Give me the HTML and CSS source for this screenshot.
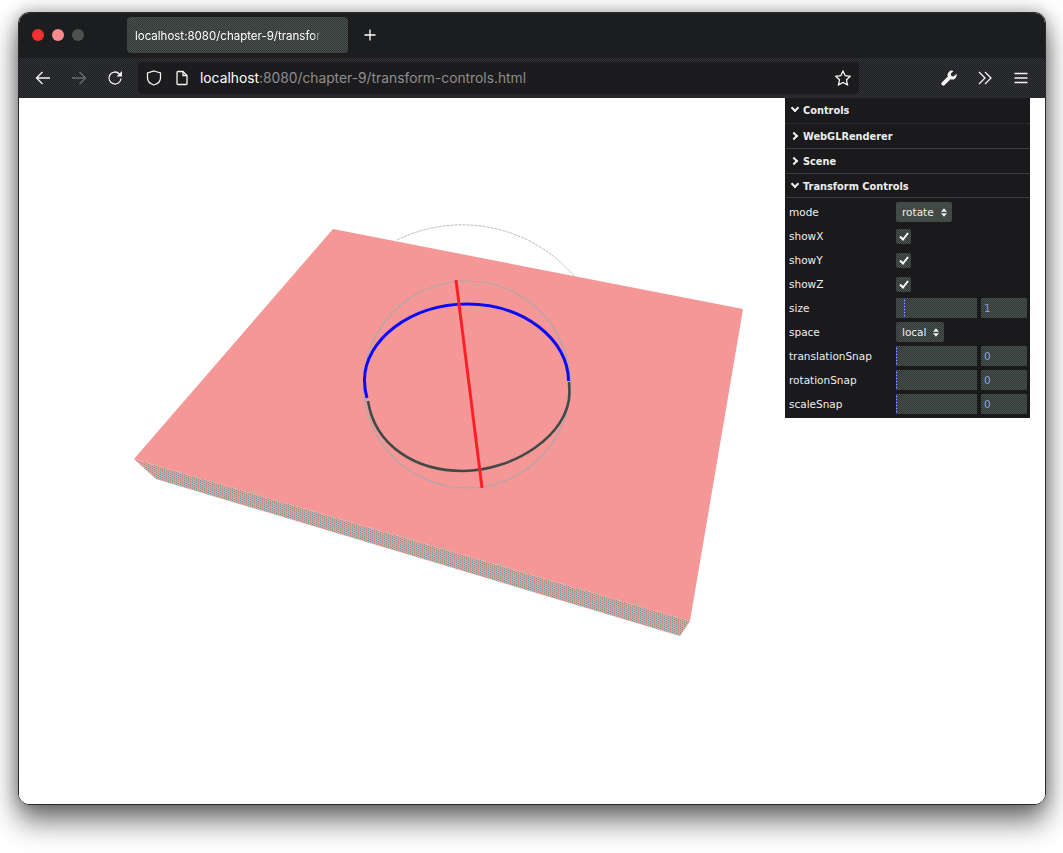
FILE: index.html
```html
<!DOCTYPE html>
<html lang="en">
<head>
    <meta charset="UTF-8">
    <title>transform-controls</title>
    <link rel="stylesheet" href="styles.css">
</head>
<body>

<div class="window">
    <div class="titlebar">
        <div class="lights">
            <span class="light red"></span>
            <span class="light pink"></span>
            <span class="light grey"></span>
        </div>
        <div class="tab">
            <span class="tab-title">localhost:8080/chapter-9/transform</span>
            <svg class="tab-close" viewBox="0 0 10 10"><path d="M1.5 1.5l7 7M8.5 1.5l-7 7"/></svg>
        </div>
        <svg class="new-tab" viewBox="0 0 12 12"><path d="M6 0.5v11M0.5 6h11"/></svg>
    </div>

    <div class="toolbar">
        <div class="tool"><svg class="icon" viewBox="0 0 16 16"><path d="M15 8H1.5M7.5 2L1.5 8l6 6"/></svg></div>
        <div class="tool dim"><svg class="icon" viewBox="0 0 16 16"><path d="M1 8h13.5M8.5 2l6 6-6 6"/></svg></div>
        <div class="tool"><svg class="icon" viewBox="0 0 16 16"><path d="M14 8.5a6 6 0 1 1-1.8-4.8L14 5.5"/><path class="solid" d="M15 1v5.5H9.500z"/></svg></div>
        <div class="urlbar">
            <svg class="icon" viewBox="0 0 16 16"><path d="M8 1l6.500 2v5c0 3.500-2.800 5.800-6.500 7-3.700-1.200-6.500-3.500-6.500-7V3z"/></svg>
            <svg class="icon" viewBox="0 0 16 16"><path d="M3 2.500a1 1 0 0 1 1-1h5l4 4v8a1 1 0 0 1-1 1H4a1 1 0 0 1-1-1z"/><path d="M9 1.500v4h4"/></svg>
            <span class="url"><b>localhost</b>:8080/chapter-9/transform-controls.html</span>
            <svg class="icon star" viewBox="0 0 16 16"><path d="M8 1l2.200 4.700 5 .6-3.700 3.500 1 5.100L8 12.400l-4.500 2.500 1-5.100L.8 6.300l5-.6z"/></svg>
        </div>
        <div class="tool first-right"><svg class="icon" viewBox="0 0 16 16"><path class="solid" d="M15.400 3.800l-2.800 2.800-2.200-.7-.7-2.200L12.500.9a4.400 4.400 0 0 0-5.700 5.600L1 12.300a1.900 1.900 0 0 0 2.700 2.700l5.800-5.800a4.400 4.400 0 0 0 5.900-5.400z"/></svg></div>
        <div class="tool"><svg class="icon" viewBox="0 0 16 16"><path d="M2 2l6 6-6 6M8 2l6 6-6 6"/></svg></div>
        <div class="tool"><svg class="icon" viewBox="0 0 16 16"><path d="M1.500 3.500h13M1.500 8h13M1.500 12.500h13"/></svg></div>
    </div>

    <div class="content">
        <!-- viewBox keeps the scene in screenshot coordinates -->
        <svg class="scene" viewBox="19 98 1026 706">
            <defs>
                <pattern id="sideDots" width="4" height="4" patternUnits="userSpaceOnUse">
                    <rect width="4" height="4" fill="#f59797"/>
                    <rect x="0" y="0" width="1" height="1" fill="#6f9c9c"/>
                    <rect x="2" y="1" width="1" height="1" fill="#6f9c9c"/>
                    <rect x="0" y="2" width="1" height="1" fill="#6f9c9c"/>
                    <rect x="2" y="3" width="1" height="1" fill="#6f9c9c"/>
                </pattern>
            </defs>
            <path class="gizmo-thin" d="M397 240A148 148 0 0 1 575 277"/>
            <polygon points="134,459 156,479 680,636 690,621" fill="url(#sideDots)"/>
            <polygon points="333,229 743,309 690,621 134,459" fill="#f59797"/>
            <circle class="gizmo-ring" cx="467" cy="384.500" r="103.500"/>
            <path class="gizmo-z" d="M367 398Q364.500 390 364.500 380C364.500 340 411 304 467 304C523 304 568.500 339 568.500 381"/>
            <path class="gizmo-y" d="M368 401C375 446 416 471 463 471C512 471 569.500 436 569.500 392L569 382"/>
            <line class="gizmo-x" x1="456" y1="280" x2="482" y2="488"/>
        </svg>

        <div class="gui">
            <div class="head open first">Controls</div>
            <div class="head">WebGLRenderer</div>
            <div class="head">Scene</div>
            <div class="head open last">Transform Controls</div>
            <div class="rows">
                <div class="row"><label>mode</label><span class="select solid-bg">rotate<svg viewBox="0 0 7 10"><path d="M3.500 0L7 4H0zM3.500 10L0 6h7z"/></svg></span></div>
                <div class="row"><label>showX</label><span class="check"><svg viewBox="0 0 12 12"><path d="M2 6.500l3 3 5-6.500"/></svg></span></div>
                <div class="row"><label>showY</label><span class="check"><svg viewBox="0 0 12 12"><path d="M2 6.500l3 3 5-6.500"/></svg></span></div>
                <div class="row"><label>showZ</label><span class="check"><svg viewBox="0 0 12 12"><path d="M2 6.500l3 3 5-6.500"/></svg></span></div>
                <div class="row"><label>size</label><span class="slider"><i class="mark size-mark"></i></span><span class="num">1</span></div>
                <div class="row"><label>space</label><span class="select">local<svg viewBox="0 0 7 10"><path d="M3.500 0L7 4H0zM3.500 10L0 6h7z"/></svg></span></div>
                <div class="row"><label>translationSnap</label><span class="slider"><i class="mark"></i></span><span class="num">0</span></div>
                <div class="row"><label>rotationSnap</label><span class="slider"><i class="mark"></i></span><span class="num">0</span></div>
                <div class="row"><label>scaleSnap</label><span class="slider"><i class="mark"></i></span><span class="num">0</span></div>
            </div>
        </div>
    </div>
</div>

</body>
</html>
```

FILE: styles.css
```css
html, body {
    margin: 0;
    background: #fff;
}

body {
    padding: 12px 17px 0 18px;
    box-sizing: border-box;
    height: 853px;
    overflow: hidden;
    font-family: Inter, "Liberation Sans", sans-serif;
}

.window {
    display: flex;
    flex-direction: column;
    height: 793px;
    box-sizing: border-box;
    border: 1px solid #2a2a2c;
    border-radius: 11px;
    overflow: hidden;
    box-shadow: 0 17px 28px rgba(0, 0, 0, 0.52), 0 0 18px rgba(0, 0, 0, 0.34);
}

/* title bar */
.titlebar {
    display: flex;
    align-items: center;
    height: 45px;
    box-sizing: border-box;
    padding: 0 0 1px 13px;
    background: #1c1d1f;
}

.lights {
    display: flex;
    gap: 8px;
}

.light {
    width: 12px;
    height: 12px;
    border-radius: 50%;
}

.red { background: #f2302f; }
.pink { background: #fb8b8d; }
.grey { background: #4b524f; }

.tab {
    display: flex;
    align-items: center;
    width: 221px;
    height: 36px;
    box-sizing: border-box;
    margin-left: 43px;
    padding: 0 11px 0 8px;
    border-radius: 4px;
    color: #fff;
    font-size: 11.5px;
    background: repeating-conic-gradient(#4b5450 0 25%, #2f3533 0 50%) 0 0 / 2px 2px;
}

.tab-title {
    flex: 1;
    margin-top: 1px;
    white-space: nowrap;
    -webkit-mask-image: linear-gradient(to right, #000 178px, transparent 186px);
    mask-image: linear-gradient(to right, #000 178px, transparent 186px);
}

.tab-close {
    width: 10px;
    height: 10px;
    margin-left: 6px;
    fill: none;
    stroke: #e8e8e8;
    stroke-width: 1;
}

.new-tab {
    width: 12px;
    height: 12px;
    margin-left: 16px;
    fill: none;
    stroke: #fff;
    stroke-width: 1.3;
}

/* toolbar */
.toolbar {
    display: flex;
    align-items: center;
    height: 40px;
    padding: 0 6px;
    background: repeating-conic-gradient(#34353a 0 25%, #1c1d1f 0 50%) 0 0 / 2px 2px;
}

.tool {
    display: flex;
    align-items: center;
    justify-content: center;
    width: 36px;
    margin-top: -1px;
}

.tool.dim .icon {
    stroke: #6b6c6f;
}

.first-right {
    margin-left: 72px;
}

.icon {
    width: 16px;
    height: 16px;
    fill: none;
    stroke: #f4f4f4;
    stroke-width: 1.3;
    flex: none;
}

.icon .solid {
    fill: #f4f4f4;
    stroke: none;
}

.urlbar {
    display: flex;
    flex: 1;
    align-items: center;
    gap: 12px;
    height: 32px;
    margin-left: 5px;
    padding: 0 8px;
    border-radius: 4px;
    background: #1c1c1e;
}

.url {
    flex: 1;
    margin-left: -2px;
    color: #8d8e90;
    font-size: 13.8px;
    white-space: nowrap;
}

.url b {
    color: #fff;
    font-weight: 400;
}

/* page area */
.content {
    position: relative;
    flex: 1;
    background: #fff;
}

.scene {
    display: block;
    width: 1026px;
    height: 706px;
}

.gizmo-thin,
.gizmo-ring,
.gizmo-z,
.gizmo-y,
.gizmo-x {
    fill: none;
}

.gizmo-thin {
    stroke: #b8b8b8;
    stroke-width: 1;
    stroke-dasharray: 3 1;
}

.gizmo-ring {
    stroke: #a9a9a9;
    stroke-width: 1.2;
}

.gizmo-z {
    stroke: #0a0aff;
    stroke-width: 3;
}

.gizmo-y {
    stroke: #3f4a47;
    stroke-width: 2.6;
}

.gizmo-x {
    stroke: #ff1f26;
    stroke-width: 3;
}

/* dat.gui panel */
.gui {
    position: absolute;
    top: 0;
    right: 15px;
    width: 245px;
    height: 320px;
    background: #1a1a1c;
    color: #eee;
    font-family: "DejaVu Sans", Verdana, sans-serif;
    font-size: 10.5px;
}

.head {
    position: relative;
    height: 24px;
    padding-left: 18px;
    border-bottom: 1px solid #3a3f3d;
    font-size: 9.8px;
    font-weight: bold;
    line-height: 26px;
}

.head.first {
    height: 25px;
    border-bottom: 1px dotted #3a3f3d;
    line-height: 25px;
}

.head.last {
    height: 23px;
}

.head::before {
    content: "";
    position: absolute;
    left: 6px;
    top: 9px;
    width: 4px;
    height: 4px;
    border-top: 2px solid #eee;
    border-right: 2px solid #eee;
    transform: rotate(45deg);
}

.head.open::before {
    left: 7px;
    top: 7px;
    transform: rotate(135deg);
}

.rows {
    padding-top: 2px;
}

.row {
    display: flex;
    align-items: center;
    height: 24px;
}

.row label {
    width: 107px;
    padding-left: 4px;
}

.select {
    display: flex;
    align-items: center;
    gap: 7px;
    height: 20px;
    padding: 0 5px 0 6px;
    border-radius: 2px;
    background: repeating-conic-gradient(#4b5450 0 25%, #2f3533 0 50%) 0 0 / 2px 2px;
}

.select.solid-bg {
    background: #414a46;
}

.select svg {
    width: 6px;
    height: 9px;
    fill: #eee;
}

.check {
    display: flex;
    align-items: center;
    justify-content: center;
    width: 15px;
    height: 15px;
    border-radius: 2px;
    background: repeating-conic-gradient(#4b5450 0 25%, #2f3533 0 50%) 0 0 / 2px 2px;
}

.check svg {
    width: 12px;
    height: 12px;
    fill: none;
    stroke: #fff;
    stroke-width: 2;
}

.slider {
    position: relative;
    width: 81px;
    height: 20px;
    background: repeating-conic-gradient(#4b5450 0 25%, #2f3533 0 50%) 0 0 / 2px 2px;
}

.mark {
    position: absolute;
    left: 0;
    top: 0;
    width: 1px;
    height: 100%;
    background: repeating-linear-gradient(#3a4ad8 0 2px, #a0a8d8 2px 3px);
}

.size-mark {
    left: 8px;
}

.num {
    width: 43px;
    height: 20px;
    margin-left: 4px;
    padding-left: 3px;
    border-radius: 1px;
    color: #8a9be0;
    line-height: 20px;
    background: repeating-conic-gradient(#4b5450 0 25%, #2f3533 0 50%) 0 0 / 2px 2px;
}
```
